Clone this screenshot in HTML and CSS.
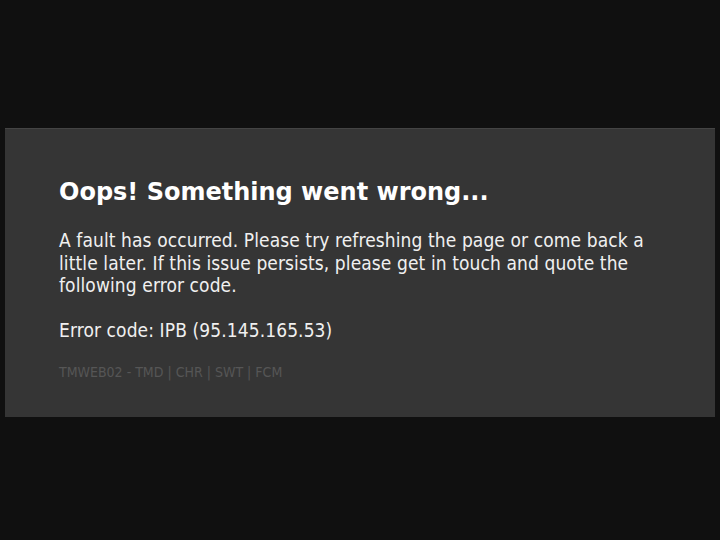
FILE: index.html
```html
<!DOCTYPE html>
<html lang="en">
<head>
<meta charset="utf-8">
<title>Error</title>
<link rel="stylesheet" href="styles.css">
</head>
<body>
<main class="card">
  <h1 class="title">Oops! Something went wrong...</h1>
  <p class="text">A fault has occurred. Please try refreshing the page or come back a little later. If this issue persists, please get in touch and quote the following error code.</p>
  <p class="code">Error code: IPB (95.145.165.53)</p>
  <p class="meta">TMWEB02 - TMD | CHR | SWT | FCM</p>
</main>
</body>
</html>
```

FILE: styles.css
```css
html, body {
  margin: 0;
  padding: 0;
  background: #101010;
}
body {
  padding-top: 128px;
  font-family: "DejaVu Sans Condensed", "DejaVu Sans", sans-serif;
  color: #f0f0f0;
}
.card {
  box-sizing: border-box;
  margin-left: 5px;
  width: 710px;
  height: 289px;
  background: #353535;
  border-top: 1px solid #444;
  padding: 48px 54px 0 54px;
}
.title {
  margin: 0 0 22px 0;
  font-family: "DejaVu Sans", sans-serif;
  font-size: 24px;
  line-height: 30px;
  font-weight: bold;
  color: #ffffff;
}
.text {
  margin: 0 0 22px 0;
  font-size: 19px;
  letter-spacing: 0.1px;
  line-height: 22.5px;
}
.code {
  margin: 0 0 22px 0;
  font-size: 19px;
  letter-spacing: 0.1px;
  line-height: 22.5px;
}
.meta {
  margin: 0;
  font-size: 14px;
  line-height: 18px;
  color: #565656;
}
```
